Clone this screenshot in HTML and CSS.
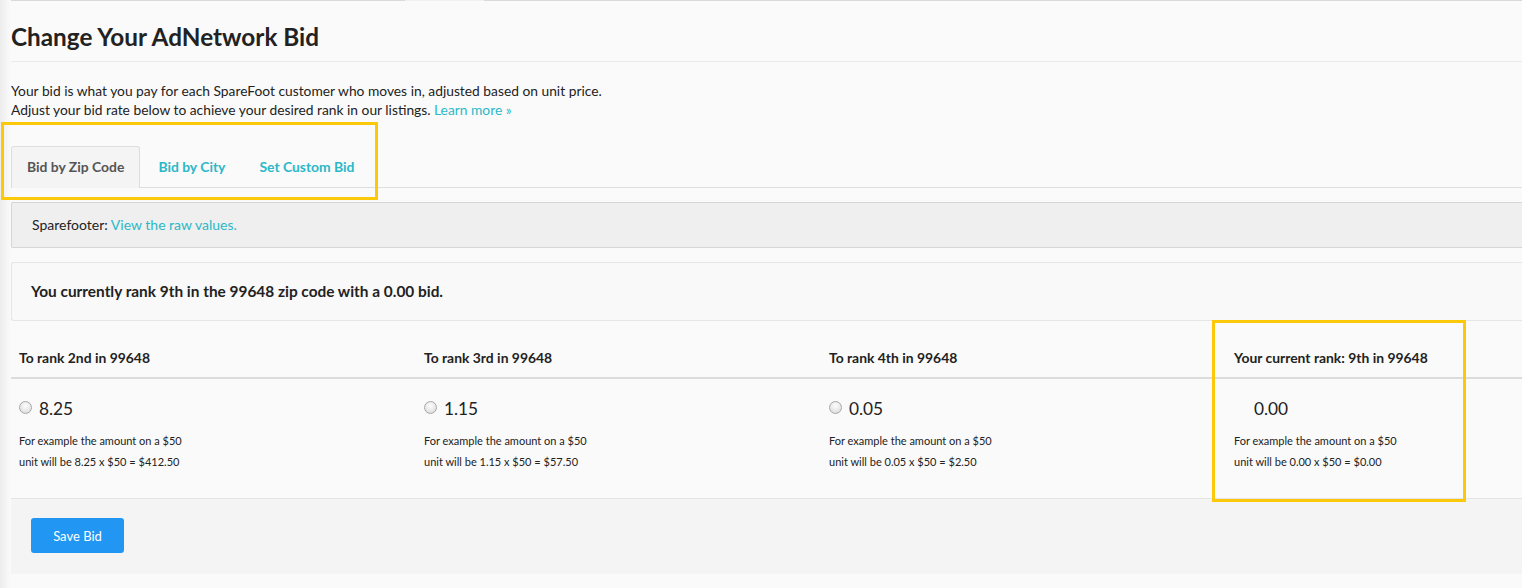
FILE: index.html
```html
<!DOCTYPE html>
<html lang="en">
<head>
<meta charset="utf-8">
<title>Change Your AdNetwork Bid</title>
<link rel="stylesheet" href="styles.css">
</head>
<body>
<div class="page">
  <div class="topnav"><span class="seg seg-a"></span><span class="seg seg-gap"></span><span class="seg seg-b"></span></div>
  <h1 class="title">Change Your AdNetwork Bid</h1>
  <p class="intro">Your bid is what you pay for each SpareFoot customer who moves in, adjusted based on unit price.<br>Adjust your bid rate below to achieve your desired rank in our listings. <a href="#" class="link">Learn more »</a></p>

  <ul class="tabs">
    <li class="tab active">Bid by Zip Code</li>
    <li class="tab">Bid by City</li>
    <li class="tab">Set Custom Bid</li>
  </ul>

  <div class="alert">Sparefooter: <a href="#" class="link">View the raw values.</a></div>

  <div class="rankbox">You currently rank 9th in the 99648 zip code with a 0.00 bid.</div>

  <div class="bidtable">
    <div class="row head">
      <div class="cell">To rank 2nd in 99648</div>
      <div class="cell">To rank 3rd in 99648</div>
      <div class="cell">To rank 4th in 99648</div>
      <div class="cell">Your current rank: 9th in 99648</div>
    </div>
    <div class="row body">
      <div class="cell">
        <label class="value"><span class="radio"></span>8.25</label>
        <p class="example">For example the amount on a $50<br>unit will be 8.25 x $50 = $412.50</p>
      </div>
      <div class="cell">
        <label class="value"><span class="radio"></span>1.15</label>
        <p class="example">For example the amount on a $50<br>unit will be 1.15 x $50 = $57.50</p>
      </div>
      <div class="cell">
        <label class="value"><span class="radio"></span>0.05</label>
        <p class="example">For example the amount on a $50<br>unit will be 0.05 x $50 = $2.50</p>
      </div>
      <div class="cell">
        <label class="value"><span class="radio hidden"></span>0.00</label>
        <p class="example">For example the amount on a $50<br>unit will be 0.00 x $50 = $0.00</p>
      </div>
    </div>
  </div>

  <div class="footer">
    <button class="btn">Save Bid</button>
  </div>
</div>

<div class="highlight hl-tabs"></div>
<div class="highlight hl-current"></div>
</body>
</html>
```

FILE: styles.css
```css
html, body {
  margin: 0;
  padding: 0;
}
body {
  width: 1522px;
  height: 588px;
  overflow: hidden;
  position: relative;
  background: linear-gradient(to right, #ececec 0px, #f3f3f3 5px, #f8f8f8 9px, #fafafa 11px);
  font-family: Lato, "Open Sans", "Liberation Sans", sans-serif;
  color: #333;
}
.page {
  margin-left: 11px;
  width: 1700px;
  background: #fafafa;
}
.topnav {
  display: flex;
  height: 1px;
}
.seg { display: block; height: 1px; }
.seg-a { width: 394px; background: #d9d9d9; }
.seg-gap { width: 79px; background: #f0f0f0; }
.seg-b { flex: 1; background: #d9d9d9; }

.title {
  margin: 0;
  padding-top: 21px;
  padding-bottom: 9px;
  font-size: 24.3px;
  line-height: 30px;
  font-weight: 700;
  color: #222;
  border-bottom: 1px solid #ebebeb;
}
.intro {
  margin: 0;
  padding-top: 19px;
  font-size: 13.8px;
  line-height: 19px;
  color: #222;
}
.link {
  color: #2bb8c8;
  text-decoration: none;
}
.tabs {
  list-style: none;
  margin: 27px 0 0;
  padding: 0;
  display: flex;
  border-bottom: 1px solid #dedede;
  height: 41px;
}
.tab {
  padding: 0 15px;
  margin-right: 2px;
  font-size: 13.9px;
  font-weight: 700;
  line-height: 40px;
  color: #2bb8c8;
  border: 1px solid transparent;
  border-bottom: 0;
  border-radius: 3px 3px 0 0;
}
.tab.active {
  color: #555;
  background: #f4f4f4;
  border-color: #dedede;
  height: 41px;
}
.alert {
  margin-top: 14px;
  height: 44px;
  line-height: 44px;
  padding-left: 20px;
  background: #efefef;
  border: 1px solid #d6d6d6;
  border-right: 0;
  border-radius: 2px 0 0 2px;
  font-size: 14px;
  color: #222;
}
.rankbox {
  margin-top: 14px;
  height: 57px;
  line-height: 57px;
  padding-left: 19px;
  background: #f9f9f9;
  border: 1px solid #e6e6e6;
  border-right: 0;
  border-radius: 3px 0 0 3px;
  font-size: 15.4px;
  font-weight: 700;
  color: #222;
}
.row {
  display: grid;
  grid-template-columns: repeat(4, 405px);
}
.row.head {
  height: 56px;
  border-bottom: 2px solid #dcdcdc;
}
.row.head .cell {
  padding: 27px 8px 0;
  font-size: 13.9px;
  line-height: 20px;
  font-weight: 700;
  color: #222;
}
.row.body {
  border-bottom: 1px solid #e4e4e4;
  height: 119px;
}
.row.body .cell {
  padding: 19px 8px 0;
}
.value {
  display: flex;
  align-items: center;
  font-size: 17.3px;
  line-height: 22px;
  color: #222;
}
.radio {
  display: inline-block;
  width: 11px;
  height: 11px;
  margin-right: 7px;
  margin-top: -4px;
  border-radius: 50%;
  border: 1px solid #a8a8a8;
  background: radial-gradient(circle at 50% 35%, #fdfdfd 0, #e6e6e6 60%, #d4d4d4 100%);
}
.radio.hidden {
  visibility: hidden;
}
.example {
  margin: 10px 0 0;
  font-size: 11px;
  line-height: 21px;
  color: #222;
}
.footer {
  height: 75px;
  background: #f4f4f4;
  padding: 19px 0 0 20px;
  box-sizing: border-box;
}
.btn {
  width: 93px;
  height: 35px;
  border: 0;
  border-radius: 3px;
  background: #2196f3;
  color: #fff;
  font-family: Lato, "Open Sans", "Liberation Sans", sans-serif;
  font-size: 13px;
  padding: 0;
}
.highlight {
  position: absolute;
  border: 3px solid #fcc80a;
  box-sizing: border-box;
}
.hl-tabs {
  left: 1px;
  top: 122px;
  width: 377px;
  height: 78px;
}
.hl-current {
  left: 1212px;
  top: 320px;
  width: 254px;
  height: 182px;
}
```
